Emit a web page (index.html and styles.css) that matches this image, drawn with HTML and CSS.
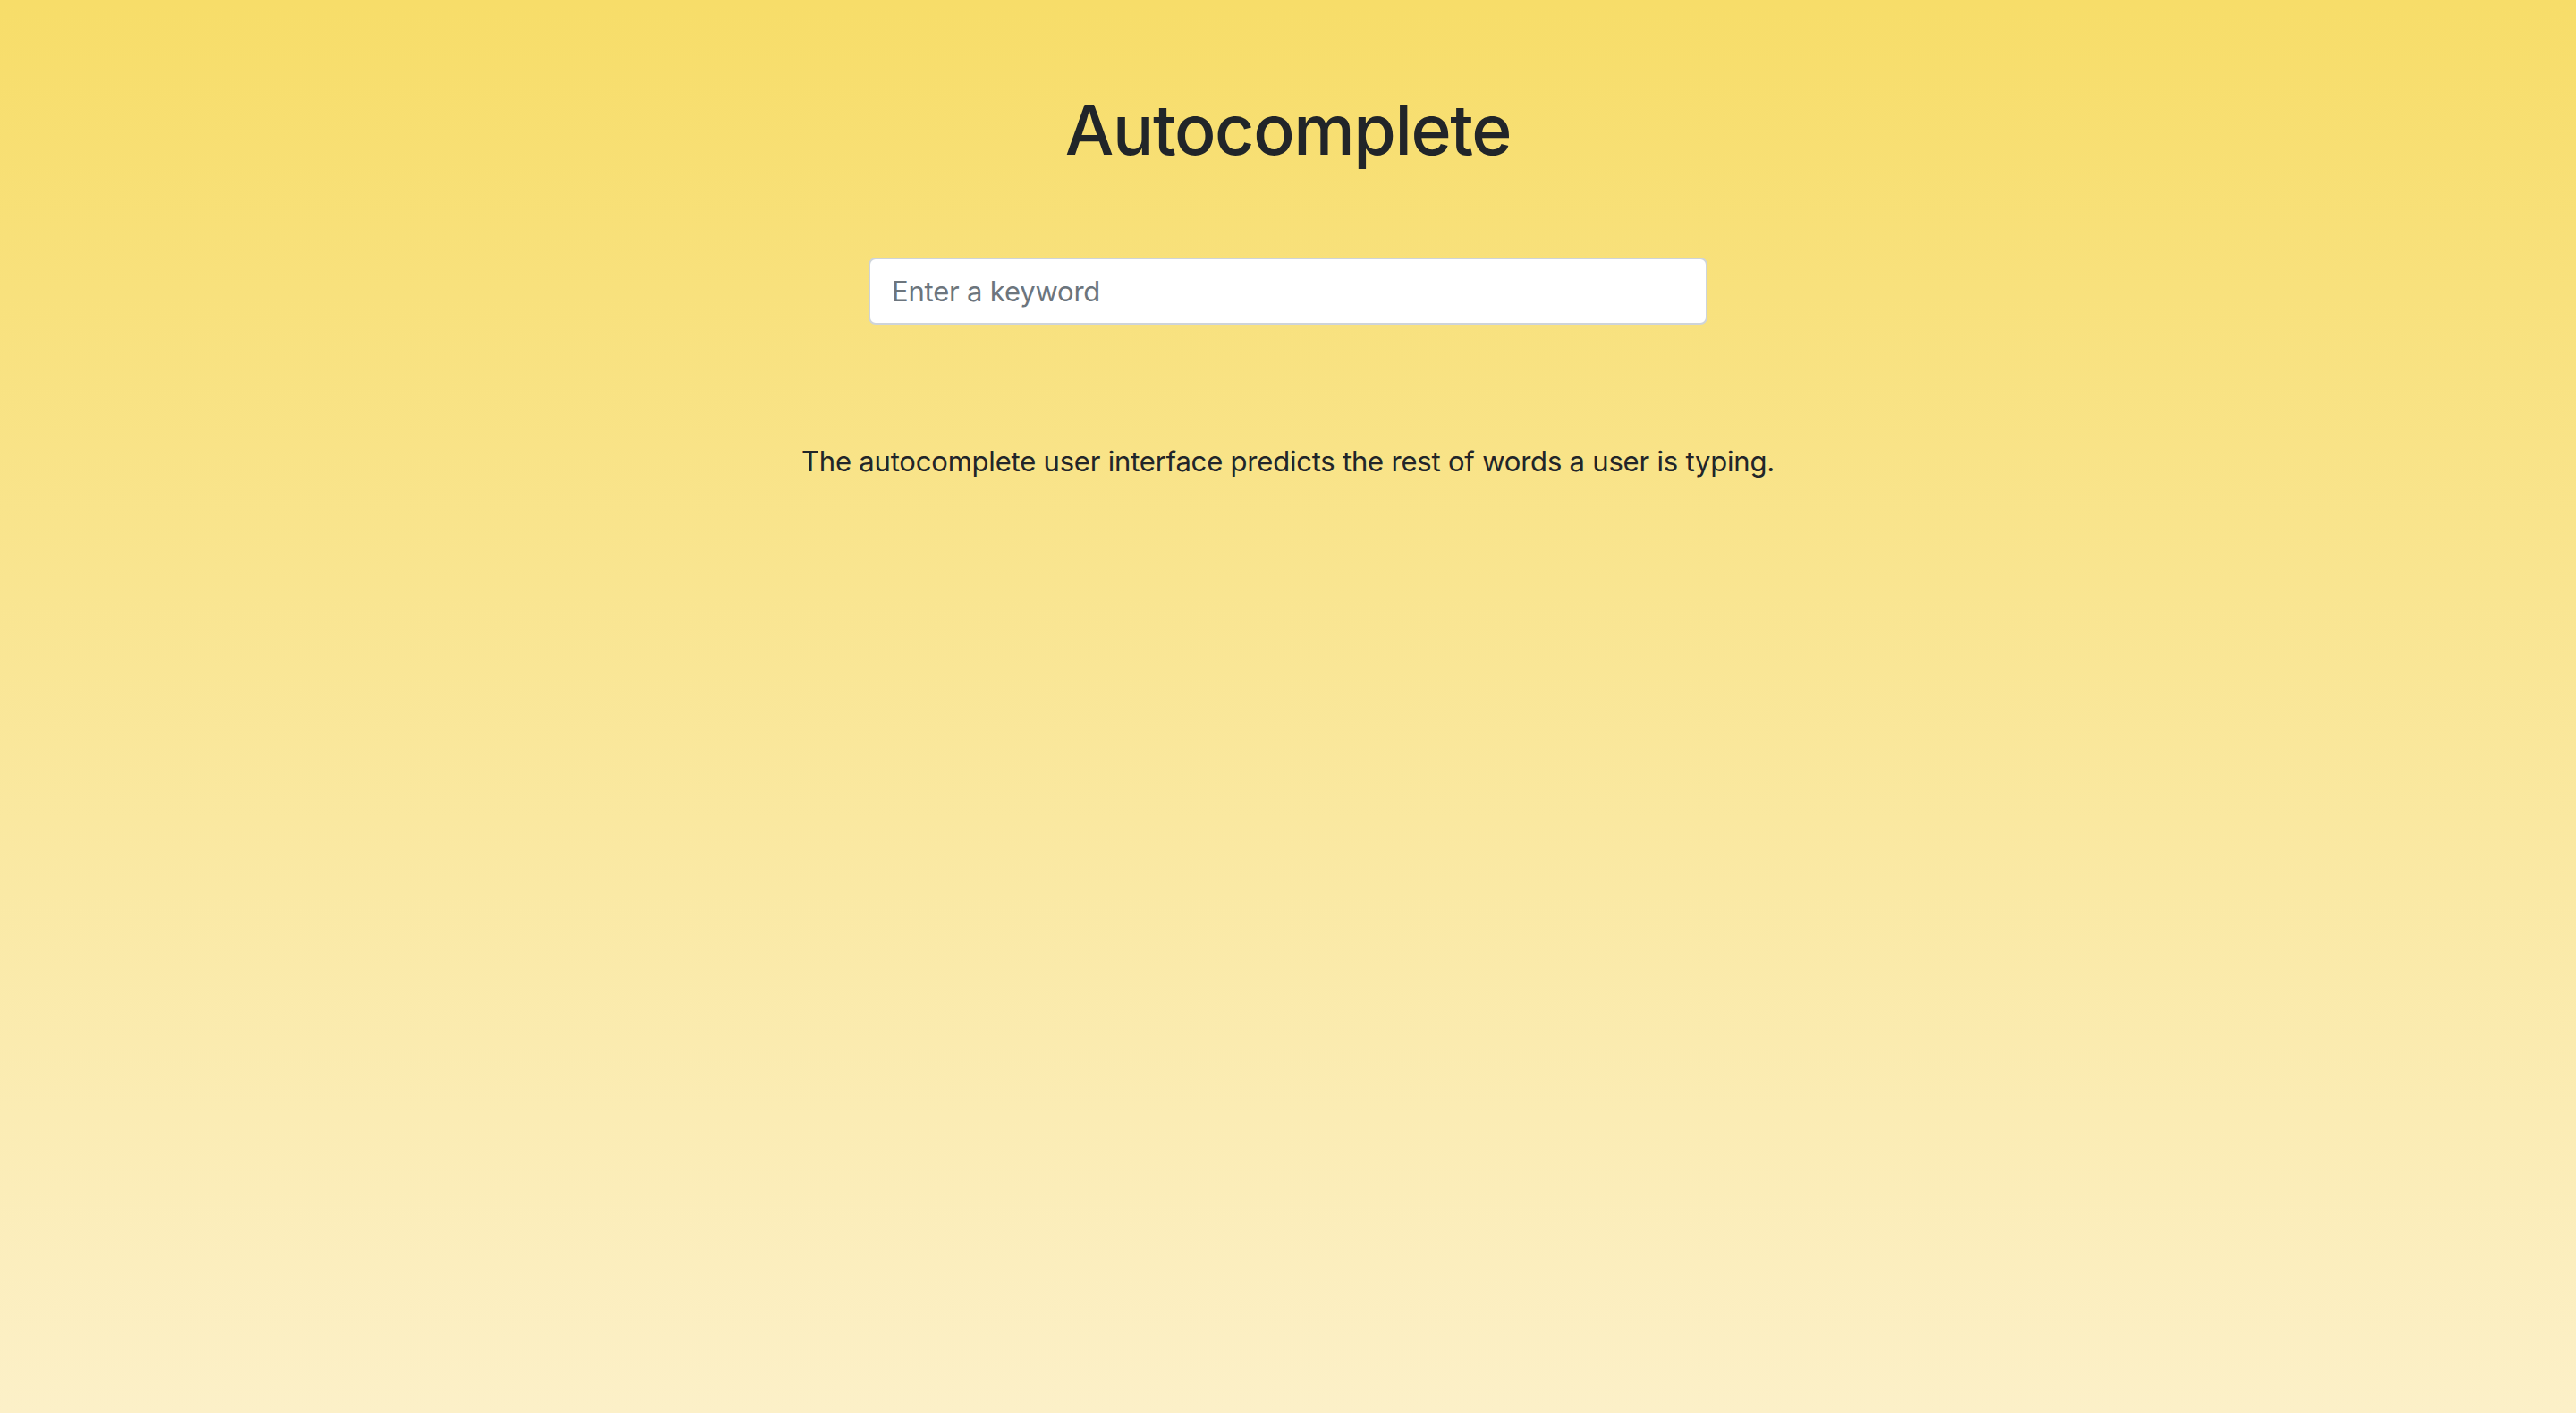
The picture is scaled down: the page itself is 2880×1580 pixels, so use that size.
FILE: index.html
```html
<!DOCTYPE html>
<html lang="en">
<head>
<meta charset="utf-8">
<title>Autocomplete</title>
<link rel="stylesheet" href="styles.css">
</head>
<body>
<main class="page">
  <h1 class="title">Autocomplete</h1>
  <div class="search">
    <input class="search-input" type="text" placeholder="Enter a keyword">
  </div>
  <p class="lead-text">The autocomplete user interface predicts the rest of words a user is typing.</p>
</main>
</body>
</html>
```

FILE: styles.css
```css
html, body {
  margin: 0;
  padding: 0;
}
body {
  min-height: 1580px;
  background: linear-gradient(180deg, #f7dd69 0%, #fcf0c8 100%);
  font-family: Inter, "Liberation Sans", sans-serif;
  color: #212529;
}
.page {
  display: flex;
  flex-direction: column;
  align-items: center;
  padding-top: 97px;
}
.title {
  margin: 0;
  font-size: 77px;
  line-height: 96px;
  font-weight: 500;
  letter-spacing: -1.4px;
}
.search {
  margin-top: 95px;
  width: 938px;
}
.search-input {
  box-sizing: border-box;
  width: 100%;
  height: 75px;
  border: 2px solid #ced4da;
  border-radius: 8px;
  background: #fff;
  padding: 0 24px;
  font-family: Inter, "Liberation Sans", sans-serif;
  font-size: 31px;
  letter-spacing: -0.2px;
  color: #495057;
  outline: none;
}
.search-input::placeholder {
  color: #6c757d;
  opacity: 1;
}
.lead-text {
  margin: 129px 0 0;
  font-size: 31px;
  line-height: 48px;
  letter-spacing: -0.2px;
}
```
